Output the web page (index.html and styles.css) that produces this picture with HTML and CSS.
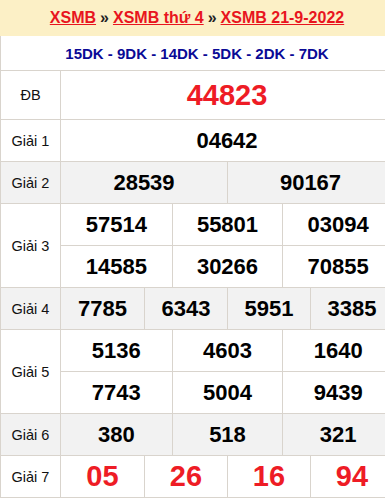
FILE: index.html
```html
<!DOCTYPE html>
<html lang="vi">
<head>
<meta charset="utf-8">
<title>XSMB 21-9-2022</title>
<link rel="stylesheet" href="styles.css">
</head>
<body>
<div class="board">
  <div class="title">
    <a href="#">XSMB</a> » <a href="#">XSMB thứ 4</a> » <a href="#">XSMB 21-9-2022</a>
  </div>
  <div class="codes">15DK - 9DK - 14DK - 5DK - 2DK - 7DK</div>

  <div class="row row-db">
    <div class="label">ĐB</div>
    <div class="nums cols-1"><div class="num big red">44823</div></div>
  </div>

  <div class="row">
    <div class="label">Giải 1</div>
    <div class="nums cols-1"><div class="num">04642</div></div>
  </div>

  <div class="row alt">
    <div class="label">Giải 2</div>
    <div class="nums cols-2"><div class="num">28539</div><div class="num">90167</div></div>
  </div>

  <div class="row">
    <div class="label">Giải 3</div>
    <div class="nums cols-3">
      <div class="num">57514</div><div class="num">55801</div><div class="num">03094</div>
      <div class="num">14585</div><div class="num">30266</div><div class="num">70855</div>
    </div>
  </div>

  <div class="row alt">
    <div class="label">Giải 4</div>
    <div class="nums cols-4">
      <div class="num">7785</div><div class="num">6343</div><div class="num">5951</div><div class="num">3385</div>
    </div>
  </div>

  <div class="row">
    <div class="label">Giải 5</div>
    <div class="nums cols-3">
      <div class="num">5136</div><div class="num">4603</div><div class="num">1640</div>
      <div class="num">7743</div><div class="num">5004</div><div class="num">9439</div>
    </div>
  </div>

  <div class="row alt">
    <div class="label">Giải 6</div>
    <div class="nums cols-3">
      <div class="num">380</div><div class="num">518</div><div class="num">321</div>
    </div>
  </div>

  <div class="row">
    <div class="label">Giải 7</div>
    <div class="nums cols-4">
      <div class="num big red">05</div><div class="num big red">26</div><div class="num big red">16</div><div class="num big red">94</div>
    </div>
  </div>
</div>
</body>
</html>
```
FILE: styles.css
```css
html, body {
  margin: 0;
  padding: 0;
  overflow: hidden;
  background: #fff;
}

body {
  font-family: "Liberation Sans", Arial, sans-serif;
  color: #000;
}

.board {
  width: 394px;
  box-sizing: border-box;
}

.title {
  height: 36px;
  background: #fcf0c6;
  display: flex;
  align-items: center;
  justify-content: center;
  font-size: 16px;
  font-weight: bold;
  color: #222;
  white-space: nowrap;
}

.title a {
  color: #e8151e;
  text-decoration: underline;
  margin: 0 4px;
}

.codes {
  height: 34px;
  border-left: 1px solid #d9d4cd;
  border-right: 1px solid #d9d4cd;
  border-bottom: 1px solid #d9d4cd;
  display: flex;
  align-items: center;
  justify-content: center;
  font-size: 15px;
  font-weight: bold;
  color: #0a0a96;
  white-space: nowrap;
}

.row {
  display: grid;
  grid-template-columns: 60px 1fr;
  border-left: 1px solid #d9d4cd;
  border-right: 1px solid #d9d4cd;
  border-bottom: 1px solid #d9d4cd;
}

.row.alt {
  background: #f2f2f2;
}

.label {
  border-right: 1px solid #d9d4cd;
  display: flex;
  align-items: center;
  justify-content: center;
  font-size: 14.5px;
  color: #111;
}

.nums {
  display: grid;
}

.cols-1 { grid-template-columns: 1fr; }
.cols-2 { grid-template-columns: repeat(2, 1fr); }
.cols-3 { grid-template-columns: repeat(3, 1fr); }
.cols-4 { grid-template-columns: repeat(4, 1fr); }

.num {
  height: 41px;
  display: flex;
  align-items: center;
  justify-content: center;
  font-size: 22px;
  font-weight: bold;
  color: #000;
}

.cols-2 .num:nth-child(2n+2),
.cols-3 .num:not(:nth-child(3n+1)),
.cols-4 .num:not(:nth-child(4n+1)) {
  border-left: 1px solid #d9d4cd;
}

.cols-3 .num:nth-child(n+4) {
  border-top: 1px solid #d9d4cd;
}

.row-db .num {
  height: 48px;
}

.num.big {
  font-size: 29px;
}

.num.red {
  color: #ee1c25;
}
```
